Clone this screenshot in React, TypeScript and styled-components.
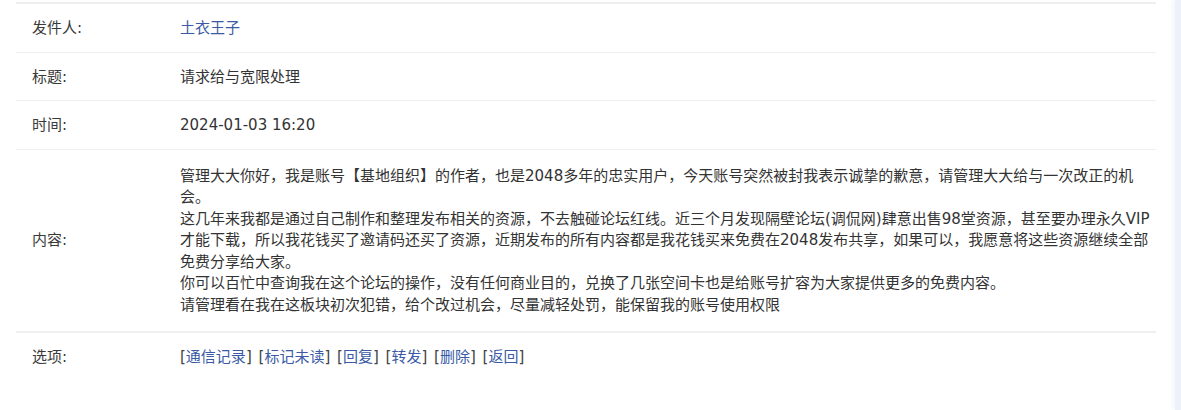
import React from "react";
import styled, { createGlobalStyle } from "styled-components";

const GlobalStyle = createGlobalStyle`
  html, body {
    margin: 0;
    padding: 0;
    background: #ffffff;
  }
  body {
    font-family: "DejaVu Sans", "Noto Sans CJK SC", sans-serif;
    font-size: 15px;
    color: #333333;
  }
`;

const Page = styled.div`
  display: flex;
  width: 1181px;
  min-height: 410px;
`;

const Main = styled.main`
  flex: 1;
  padding: 2px 19px 0 16px;
`;

const SideStrip = styled.aside`
  width: 6px;
  background: #edf1f9;
  box-shadow: -3px 0 4px rgba(237, 241, 249, 0.6);
`;

const Table = styled.div`
  border-top: 2px solid #efefef;
`;

const Row = styled.div<{ $tall?: boolean; $last?: boolean }>`
  display: grid;
  grid-template-columns: 164px 1fr;
  align-items: center;
  border-bottom: ${(p) => (p.$last ? "none" : p.$tall ? "2px solid #efefef" : "1px solid #efefef")};
  padding: ${(p) => (p.$tall ? "16px 0 15px" : "14px 0 12px")};
  line-height: 21.5px;
`;

const Label = styled.div`
  padding-left: 16px;
  color: #3a3a3a;
`;

const Value = styled.div`
  color: #333333;
`;

const Para = styled.p`
  margin: 0;
`;

const Link = styled.a`
  color: #3a5aa6;
  text-decoration: none;
  cursor: pointer;
`;

const Options = styled.div`
  color: #444444;
  white-space: pre;
`;

const Option = styled.span<{ $first?: boolean }>`
  margin-left: ${(p) => (p.$first ? "0" : "2px")};
`;

const options = ["通信记录", "标记未读", "回复", "转发", "删除", "返回"];

export default function App() {
  return (
    <>
      <GlobalStyle />
      <Page>
        <Main>
          <Table>
            <Row>
              <Label>发件人:</Label>
              <Value>
                <Link>土衣王子</Link>
              </Value>
            </Row>
            <Row>
              <Label>标题:</Label>
              <Value>请求给与宽限处理</Value>
            </Row>
            <Row>
              <Label>时间:</Label>
              <Value>2024-01-03 16:20</Value>
            </Row>
            <Row $tall>
              <Label>内容:</Label>
              <Value>
                <Para>
                  管理大大你好，我是账号【基地组织】的作者，也是2048多年的忠实用户，今天账号突然被封我表示诚挚的歉意，请管理大大给与一次改正的机会。
                </Para>
                <Para>
                  这几年来我都是通过自己制作和整理发布相关的资源，不去触碰论坛红线。近三个月发现隔壁论坛(调侃网)肆意出售98堂资源，甚至要办理永久VIP才能下载，所以我花钱买了邀请码还买了资源，近期发布的所有内容都是我花钱买来免费在2048发布共享，如果可以，我愿意将这些资源继续全部免费分享给大家。
                </Para>
                <Para>
                  你可以百忙中查询我在这个论坛的操作，没有任何商业目的，兑换了几张空间卡也是给账号扩容为大家提供更多的免费内容。
                </Para>
                <Para>请管理看在我在这板块初次犯错，给个改过机会，尽量减轻处罚，能保留我的账号使用权限</Para>
              </Value>
            </Row>
            <Row $last>
              <Label>选项:</Label>
              <Options>
                {options.map((o, i) => (
                  <React.Fragment key={o}>
                    {i > 0 ? " " : ""}
                    <Option $first={i === 0}>
                      [<Link>{o}</Link>]
                    </Option>
                  </React.Fragment>
                ))}
              </Options>
            </Row>
          </Table>
        </Main>
        <SideStrip />
      </Page>
    </>
  );
}
